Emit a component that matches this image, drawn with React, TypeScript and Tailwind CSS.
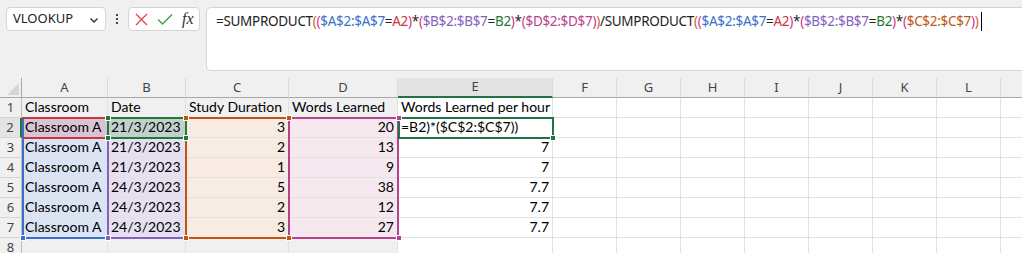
import React from 'react';

// Colours used by Excel for range references in the formula
const C = {
  blue: '#3a70c8',
  red: '#c8373d',
  purple: '#8561bd',
  green: '#1f7a35',
  magenta: '#b8438a',
  orange: '#c0550f',
  outer: '#c8651f',
  inner: '#d0358a',
};

type Seg = [string, string];

const half: Seg[] = [
  ['(', C.outer],
  ['(', C.inner],
  ['$A$2:$A$7', C.blue],
  ['=', '#222'],
  ['A2', C.red],
  [')', C.inner],
  ['*', '#222'],
  ['(', C.inner],
  ['$B$2:$B$7', C.purple],
  ['=', '#222'],
  ['B2', C.green],
  [')', C.inner],
  ['*', '#222'],
  ['(', C.inner],
];

const formula: Seg[] = [
  ['=SUMPRODUCT', '#222'],
  ...half,
  ['$D$2:$D$7', C.magenta],
  [')', C.inner],
  [')', C.outer],
  ['/SUMPRODUCT', '#222'],
  ...half,
  ['$C$2:$C$7', C.orange],
  [')', C.inner],
  [')', C.outer],
];

// last column (M) sits mostly off screen, its label is not visible
const letters = ['A', 'B', 'C', 'D', 'E', 'F', 'G', 'H', 'I', 'J', 'K', 'L', ''];

type Row = { a: string; b: string; c: string; d: string; e: string };

const rows: Row[] = [
  { a: 'Classroom', b: 'Date', c: 'Study Duration', d: 'Words Learned', e: 'Words Learned per hour' },
  { a: 'Classroom A', b: '21/3/2023', c: '3', d: '20', e: '' },
  { a: 'Classroom A', b: '21/3/2023', c: '2', d: '13', e: '7' },
  { a: 'Classroom A', b: '21/3/2023', c: '1', d: '9', e: '7' },
  { a: 'Classroom A', b: '24/3/2023', c: '5', d: '38', e: '7.7' },
  { a: 'Classroom A', b: '24/3/2023', c: '2', d: '12', e: '7.7' },
  { a: 'Classroom A', b: '24/3/2023', c: '3', d: '27', e: '7.7' },
  { a: '', b: '', c: '', d: '', e: '' },
];

const cellBase =
  'h-[20px] border-r border-b border-[#e1e1e1] flex items-end pb-[1px] px-[3px] whitespace-nowrap overflow-visible text-[14px] leading-[18px] text-black font-["Lato",sans-serif]';

const fills = (r: number) => {
  if (r < 2 || r > 7) return ['', '', '', ''];
  return [
    r === 2 ? 'bg-[#d9c4d5]' : 'bg-[#dae4f4]',
    r === 2 ? 'bg-[#c4d0cb]' : 'bg-[#e6e0f0]',
    'bg-[#f8ebe4]',
    'bg-[#f6e8ef]',
  ];
};

const Handle = ({ cls, color }: { cls: string; color: string }) => (
  <div className={`absolute w-[6px] h-[6px] border border-white ${cls}`} style={{ backgroundColor: color }} />
);

export default function App() {
  return (
    <div className="w-[1022px] h-[253px] overflow-hidden bg-[#f0f0f0]" style={{ fontFamily: '"Noto Sans", "Open Sans", sans-serif' }}>
      {/* formula bar */}
      <div className="h-[78px] flex items-start pt-[7px] pl-[6px]">
        <div className="shrink-0 w-[100px] h-[24px] bg-white border border-[#d4d4d4] rounded-[4px] flex items-center justify-between pl-[6px] pr-[6px]">
          <span className="text-[13px] text-[#222]">VLOOKUP</span>
          <svg width="10" height="10" viewBox="0 0 10 10" className="mt-[2px]">
            <path d="M1.5 3.5 L5 7 L8.5 3.5" fill="none" stroke="#333" strokeWidth="1.4" />
          </svg>
        </div>
        <div className="shrink-0 w-[22px] h-[24px] flex flex-col items-center justify-center gap-[2px]">
          <div className="w-[2px] h-[2px] bg-[#444]" />
          <div className="w-[2px] h-[2px] bg-[#444]" />
          <div className="w-[2px] h-[2px] bg-[#444]" />
        </div>
        <div className="shrink-0 w-[72px] h-[24px] bg-white border border-[#d4d4d4] rounded-[4px] flex items-center pl-[6px] gap-[9px]">
          <svg width="13" height="13" viewBox="0 0 13 13">
            <path d="M1 1 L12 12 M12 1 L1 12" stroke="#e0454b" strokeWidth="1.3" />
          </svg>
          <svg width="16" height="13" viewBox="0 0 16 13">
            <path d="M1 6.5 L5.5 11 L15 1.5" fill="none" stroke="#3c9d4a" strokeWidth="1.3" />
          </svg>
          <span className="text-[16px] italic text-[#333] leading-none" style={{ fontFamily: '"Liberation Serif", serif' }}>fx</span>
        </div>
        <div className="shrink-0 ml-[6px] w-[840px] h-[64px] bg-white border border-[#d4d4d4] rounded-[5px] pl-[9px] pt-[1px]">
          <div className="flex items-center text-[13.5px] leading-[24px] whitespace-nowrap tracking-[-0.3px]">
            {formula.map(([t, col], i) => (
              <span key={i} style={{ color: col }}>{t}</span>
            ))}
            <span className="ml-[2px] w-[1px] h-[19px] bg-black" />
          </div>
        </div>
      </div>

      {/* sheet */}
      <div className="relative">
        <div className="grid grid-cols-[22px_86px_78px_103px_109px_155px_64px_64px_64px_64px_64px_64px_64px_64px]">
          {/* header row */}
          <div className="h-[20px] border-b border-r border-[#a8a8a8] relative">
            <svg width="12" height="12" viewBox="0 0 12 12" className="absolute left-[7px] top-[5px]">
              <path d="M12 0 L12 12 L0 12 Z" fill="#d6d6d6" />
            </svg>
          </div>
          {letters.map((l, i) => (
            <div
              key={i}
              className={`h-[20px] border-r border-[#dadada] flex items-center justify-center text-[13px] text-[#444] ${
                l === 'E' ? 'border-b-2 border-b-[#217346] bg-[#e3e3e3]' : 'border-b border-b-[#a8a8a8]'
              }`}
            >
              {l}
            </div>
          ))}

          {rows.map((r, i) => {
            const n = i + 1;
            const f = fills(n);
            return (
              <React.Fragment key={n}>
                <div
                  className={`h-[20px] border-b border-[#d6d6d6] flex items-center justify-center text-[13px] text-[#444] ${
                    n === 2 ? 'bg-[#e3e3e3] border-r-2 border-r-[#217346]' : 'border-r border-r-[#bdbdbd]'
                  }`}
                >
                  {n}
                </div>
                <div className={`${cellBase} ${f[0]}`}>{r.a}</div>
                <div className={`${cellBase} ${f[1]}`}>{r.b}</div>
                <div className={`${cellBase} ${f[2]} ${n > 1 ? 'justify-end' : ''}`}>{r.c}</div>
                <div className={`${cellBase} ${f[3]} ${n > 1 ? 'justify-end' : ''}`}>{r.d}</div>
                <div className={`${cellBase} bg-white ${n > 2 ? 'justify-end' : ''}`}>{n === 2 ? '=B2)*($C$2:$C$7))' : r.e}</div>
                {[0, 1, 2, 3, 4, 5, 6, 7].map((k) => (
                  <div key={k} className="h-[20px] border-r border-b border-[#e1e1e1] bg-white" />
                ))}
              </React.Fragment>
            );
          })}
        </div>

        {/* reference outlines */}
        <div className="absolute left-[22px] top-[39px] w-[87px] h-[122px] border-2 border-[#3a70c8]" />
        <div className="absolute left-[107px] top-[39px] w-[80px] h-[122px] border-2 border-[#8561bd]" />
        <div className="absolute left-[185px] top-[39px] w-[105px] h-[122px] border-2 border-[#c0550f]" />
        <div className="absolute left-[288px] top-[39px] w-[111px] h-[122px] border-2 border-[#b8438a]" />
        <div className="absolute left-[22px] top-[39px] w-[86px] h-[22px] border-y-2 border-[#c8373d]" />
        <div className="absolute left-[107px] top-[39px] w-[80px] h-[22px] border-2 border-[#1f7a35]" />
        <div className="absolute left-[398px] top-[39px] w-[156px] h-[22px] border-2 border-[#217346]" />

        <Handle cls="left-[20px] top-[157px]" color={C.blue} />
        <Handle cls="left-[105px] top-[157px]" color={C.purple} />
        <Handle cls="left-[183px] top-[37px]" color={C.orange} />
        <Handle cls="left-[183px] top-[157px]" color={C.orange} />
        <Handle cls="left-[286px] top-[37px]" color={C.orange} />
        <Handle cls="left-[286px] top-[157px]" color={C.orange} />
        <Handle cls="left-[396px] top-[37px]" color={C.magenta} />
        <Handle cls="left-[396px] top-[157px]" color={C.magenta} />
        <Handle cls="left-[105px] top-[37px]" color={C.green} />
        <Handle cls="left-[105px] top-[57px]" color={C.green} />
        <Handle cls="left-[183px] top-[57px]" color={C.green} />
        <Handle cls="left-[550px] top-[57px]" color="#217346" />
      </div>
    </div>
  );
}
